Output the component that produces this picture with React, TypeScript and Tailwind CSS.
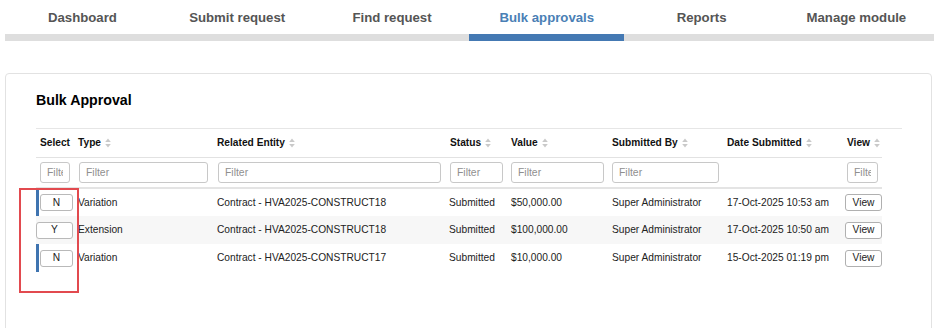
import React from "react";

const tabs = ["Dashboard", "Submit request", "Find request", "Bulk approvals", "Reports", "Manage module"];

function SortIcon() {
  return (
    <svg width="6" height="10" viewBox="0 0 6 10" className="ml-[4px] inline-block">
      <path d="M3 0.5 L5.8 4 L0.2 4 Z" fill="#c9c9c9" />
      <path d="M3 9.5 L5.8 6 L0.2 6 Z" fill="#c9c9c9" />
    </svg>
  );
}

const cols = [
  { label: "Select", w: 38, sort: false, filter: true },
  { label: "Type", w: 139, sort: true, filter: true },
  { label: "Related Entity", w: 233, sort: true, filter: true },
  { label: "Status", w: 61, sort: true, filter: true },
  { label: "Value", w: 101, sort: true, filter: true },
  { label: "Submitted By", w: 115, sort: true, filter: true },
  { label: "Date Submitted", w: 120, sort: true, filter: false },
  { label: "View", w: 39, sort: true, filter: true },
];

const rows = [
  { sel: "N", type: "Variation", entity: "Contract - HVA2025-CONSTRUCT18", status: "Submitted", value: "$50,000.00", by: "Super Administrator", date: "17-Oct-2025 10:53 am" },
  { sel: "Y", type: "Extension", entity: "Contract - HVA2025-CONSTRUCT18", status: "Submitted", value: "$100,000.00", by: "Super Administrator", date: "17-Oct-2025 10:50 am" },
  { sel: "N", type: "Variation", entity: "Contract - HVA2025-CONSTRUCT17", status: "Submitted", value: "$10,000.00", by: "Super Administrator", date: "15-Oct-2025 01:19 pm" },
];

export default function App() {
  return (
    <div
      className="relative w-[934px] h-[328px] overflow-hidden bg-white text-[#222]"
      style={{ fontFamily: '"Liberation Sans", Arial, sans-serif' }}
    >
      {/* Tabs */}
      <div className="pl-[5px]">
        <div className="flex h-[34px]">
          {tabs.map((t, i) => (
            <div
              key={t}
              className={`w-[154.8px] shrink-0 flex items-center justify-center pt-[2px] text-[13.2px] font-bold ${
                i === 3 ? "text-[#4a7fb5]" : "text-[#555]"
              }`}
            >
              {t}
            </div>
          ))}
        </div>
        <div className="flex h-[7px] bg-[#dedede]">
          <div className="w-[464.4px]" />
          <div className="w-[154.8px] bg-[#4479b3]" />
        </div>
      </div>

      {/* Card */}
      <div className="ml-[5px] mt-[32px] w-[927px] h-[300px] border border-[#e2e2e2] rounded-[4px] pl-[30px] pr-[29px]">
        <div className="pt-[17px] h-[54px] text-[14.2px] font-bold text-black leading-[18px]">Bulk Approval</div>
        <div className="border-t border-[#e6e6e6]">
          <table className="table-fixed border-collapse w-[846px] text-[10.2px]">
            <colgroup>
              {cols.map((c) => (
                <col key={c.label} style={{ width: c.w }} />
              ))}
            </colgroup>
            <thead>
              <tr className="h-[28px] border-b border-[#e2e2e2]">
                {cols.map((c) => (
                  <th key={c.label} className="px-[4px] text-left font-bold text-[#111] whitespace-nowrap">
                    <span className="inline-flex items-center">
                      {c.label}
                      {c.sort && <SortIcon />}
                    </span>
                  </th>
                ))}
              </tr>
              <tr className="h-[31px] border-b-2 border-[#e4e4e4]">
                {cols.map((c, i) => (
                  <th key={c.label} className={`${i === 1 || i === 2 ? "pl-[5px] pr-[5px]" : "px-[4px]"} font-normal`}>
                    {c.filter && (
                      <input
                        readOnly
                        placeholder="Filter"
                        className="block w-full h-[21px] border border-[#c8c8c8] rounded-[3px] px-[6px] text-[10.4px] placeholder:text-[#8f8f8f] outline-none"
                        style={{ fontFamily: '"Liberation Sans", Arial, sans-serif' }}
                      />
                    )}
                  </th>
                ))}
              </tr>
            </thead>
            <tbody>
              {rows.map((r, i) => (
                <tr key={i} className={`h-[28px] ${i === 1 ? "bg-[#f7f7f7]" : ""}`}>
                  <td className={`pr-[1px] ${r.sel === "N" ? "pl-[4px] shadow-[inset_3px_0_0_#3f74b0]" : "pl-0"}`}>
                    <div className="h-[17px] border border-[#b9b9b9] rounded-[3px] bg-white flex items-center justify-center text-[10.2px]">
                      {r.sel}
                    </div>
                  </td>
                  <td className="px-[4px] whitespace-nowrap">{r.type}</td>
                  <td className="px-[4px] whitespace-nowrap">{r.entity}</td>
                  <td className="px-[3px] whitespace-nowrap">{r.status}</td>
                  <td className="px-[4px] whitespace-nowrap">{r.value}</td>
                  <td className="px-[4px] whitespace-nowrap">{r.by}</td>
                  <td className="px-[4px] whitespace-nowrap">{r.date}</td>
                  <td className="pl-[2px] pr-[1px]">
                    <div className="h-[17px] w-[37px] border border-[#b0b0b0] rounded-[3px] bg-white flex items-center justify-center text-[10.2px]">
                      View
                    </div>
                  </td>
                </tr>
              ))}
            </tbody>
          </table>
        </div>
      </div>

      {/* Red annotation */}
      <div className="absolute left-[19px] top-[188px] w-[60px] h-[105px] border-2 border-[#e24a4f]" />
    </div>
  );
}
